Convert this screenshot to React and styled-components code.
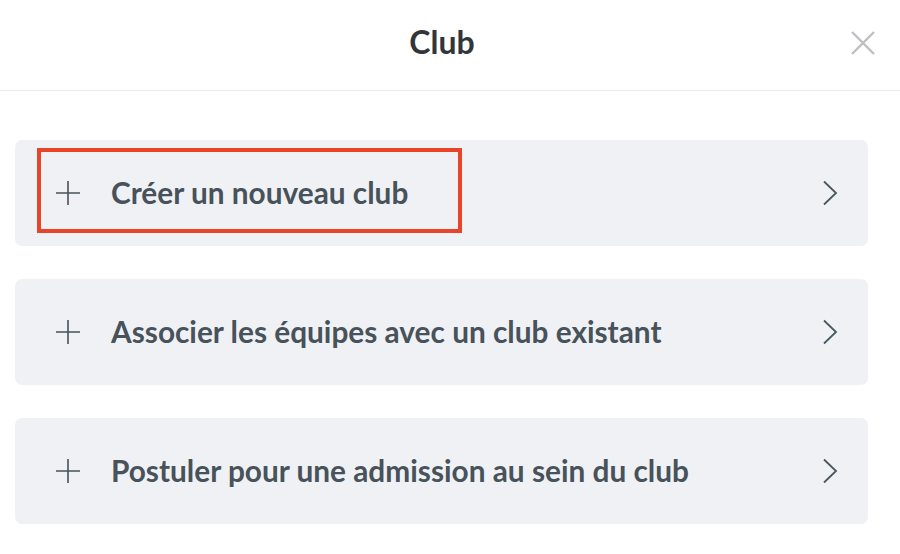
import React from "react";
import styled, { createGlobalStyle } from "styled-components";

const GlobalStyle = createGlobalStyle`
  html, body {
    margin: 0;
    padding: 0;
    background: #ffffff;
    font-family: Lato, "Open Sans", sans-serif;
  }
`;

const Modal = styled.div`
  width: 900px;
  height: 554px;
  background: #fff;
  overflow: hidden;
`;

const Header = styled.div`
  height: 90px;
  border-bottom: 1px solid #ebecf0;
  display: flex;
  align-items: center;
  justify-content: center;
  padding-right: 16px;
  position: relative;
`;

const Title = styled.h1`
  margin: 0;
  font-size: 32px;
  font-weight: 700;
  color: #333639;
  padding-bottom: 8px;
`;

const CloseButton = styled.button`
  position: absolute;
  right: 24px;
  top: 30px;
  width: 26px;
  height: 26px;
  padding: 0;
  border: none;
  background: none;
  cursor: pointer;
  display: flex;
  align-items: center;
  justify-content: center;
`;

const List = styled.div`
  display: flex;
  flex-direction: column;
  gap: 33px;
  padding: 49px 32px 0 15px;
`;

const Card = styled.div`
  position: relative;
  height: 106px;
  background: #f0f1f5;
  border-radius: 7px;
  display: flex;
  align-items: center;
  padding: 0 30px 0 39px;
  cursor: pointer;
`;

const PlusIcon = styled.span`
  width: 28px;
  height: 28px;
  display: flex;
  align-items: center;
  justify-content: center;
  margin-right: 29px;
`;

const Label = styled.span`
  flex: 1;
  font-size: 29.8px;
  font-weight: 700;
  color: #47525a;
  padding-bottom: 2px;
`;

const Chevron = styled.span`
  display: flex;
  align-items: center;
`;

const Highlight = styled.div`
  position: absolute;
  left: 22px;
  top: 8px;
  width: 425px;
  height: 85px;
  box-sizing: border-box;
  border: 4px solid #e8442a;
  pointer-events: none;
`;

const items = [
  { label: "Créer un nouveau club", highlighted: true },
  { label: "Associer les équipes avec un club existant" },
  { label: "Postuler pour une admission au sein du club" },
];

export default function App() {
  return (
    <Modal>
      <GlobalStyle />
      <Header>
        <Title>Club</Title>
        <CloseButton aria-label="Fermer">
          <svg width="26" height="26" viewBox="0 0 26 26">
            <path d="M2 2 L24 24 M24 2 L2 24" stroke="#bdbfc2" strokeWidth="2.4" fill="none" />
          </svg>
        </CloseButton>
      </Header>
      <List>
        {items.map((it) => (
          <Card key={it.label}>
            <PlusIcon>
              <svg width="28" height="28" viewBox="0 0 28 28">
                <path d="M14 2 V26 M2 14 H26" stroke="#47525a" strokeWidth="1.6" fill="none" />
              </svg>
            </PlusIcon>
            <Label>{it.label}</Label>
            <Chevron>
              <svg width="16" height="26" viewBox="0 0 16 26">
                <path d="M2 1.5 L14 13 L2 24.5" stroke="#4a5660" strokeWidth="1.8" fill="none" />
              </svg>
            </Chevron>
            {it.highlighted && <Highlight />}
          </Card>
        ))}
      </List>
    </Modal>
  );
}
